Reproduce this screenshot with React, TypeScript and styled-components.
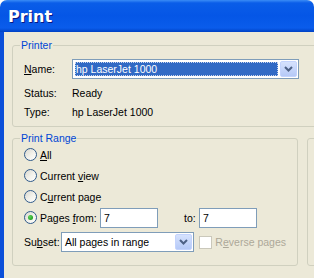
import React from 'react';
import styled, { createGlobalStyle } from 'styled-components';

const GlobalStyle = createGlobalStyle`
  html, body {
    margin: 0;
    padding: 0;
    background: #fff;
  }
  body {
    font-family: "Liberation Sans", Arial, sans-serif;
    font-size: 10.5px;
    color: #000;
  }
`;

const Window = styled.div`
  width: 314px;
  height: 278px;
  overflow: hidden;
  display: flex;
  flex-direction: column;
  border-radius: 7px 7px 0 0;
  background: #ece9d8;
`;

const TitleBar = styled.div`
  height: 32px;
  flex: none;
  display: flex;
  align-items: center;
  padding-left: 8px;
  background: linear-gradient(
    #3a8cf6 0px,
    #0a5de8 3px,
    #0556e6 16px,
    #0a5ceb 28px,
    #0041c4 32px
  );
`;

const Title = styled.span`
  font-family: "DejaVu Sans", sans-serif;
  font-weight: bold;
  font-size: 16px;
  color: #fff;
  text-shadow: 1px 1px 0 #0a1883;
  margin-top: 1px;
`;

const Body = styled.div`
  flex: 1;
  display: flex;
  flex-direction: column;
  border-left: 4px solid #0b4fd9;
  padding: 13px 0 0 8px;
`;

const Group = styled.div<{ $width: number; $bottom?: number }>`
  flex: none;
  width: ${p => p.$width}px;
  box-sizing: border-box;
  border: 1px solid #d0d0bf;
  border-radius: 3px;
  display: flex;
  flex-direction: column;
  padding: 0 11px ${p => p.$bottom ?? 8}px 11px;
`;

const Legend = styled.span`
  align-self: flex-start;
  margin: -7px 0 0 -4px;
  padding: 0 1px;
  height: 13px;
  line-height: 13px;
  background: #ece9d8;
  color: #0046d5;
`;

const Row = styled.div<{ $h?: number; $top?: number }>`
  display: flex;
  align-items: center;
  height: ${p => p.$h ?? 13}px;
  margin-top: ${p => p.$top ?? 0}px;
  white-space: nowrap;
`;

const Caption = styled.span<{ $w?: number; $ml?: number; $disabled?: boolean }>`
  flex: none;
  width: ${p => (p.$w ? `${p.$w}px` : 'auto')};
  margin-left: ${p => p.$ml ?? 0}px;
  color: ${p => (p.$disabled ? '#aca899' : '#000')};
`;

const U = styled.span`
  text-decoration: underline;
`;

const Combo = styled.div<{ $w: number }>`
  width: ${p => p.$w}px;
  height: 20px;
  box-sizing: border-box;
  border: 1px solid #7f9db9;
  background: #fff;
  display: flex;
  align-items: stretch;
  padding: 1px;
`;

const ComboValue = styled.div<{ $selected?: boolean }>`
  flex: 1;
  display: flex;
  align-items: center;
  margin: 1px 2px 1px 1px;
  padding-left: 1px;
  background: ${p => (p.$selected ? '#316ac5' : 'transparent')};
  color: ${p => (p.$selected ? '#fff' : '#000')};
  outline: ${p => (p.$selected ? '1px dotted #c7d4ec' : 'none')};
  outline-offset: -1px;
`;

const DropButton = styled.div`
  width: 17px;
  box-sizing: border-box;
  border: 1px solid #c3d3fd;
  border-radius: 2px;
  background: linear-gradient(#d6e2fd, #b5c9f7);
  display: flex;
  align-items: center;
  justify-content: center;
`;

const Field = styled.div<{ $w: number }>`
  width: ${p => p.$w}px;
  height: 20px;
  box-sizing: border-box;
  border: 1px solid #7f9db9;
  background: #fff;
  padding-left: 3px;
  display: flex;
  align-items: center;
`;

const RadioCircle = styled.span<{ $checked?: boolean }>`
  flex: none;
  width: 13px;
  height: 13px;
  box-sizing: border-box;
  border-radius: 50%;
  border: 1px solid #2f5a8a;
  background: linear-gradient(135deg, #d8d7cf 0%, #f3f2ec 55%, #ffffff 100%);
  display: flex;
  align-items: center;
  justify-content: center;
  margin-right: 3px;
  &::after {
    content: '';
    width: 5px;
    height: 5px;
    border-radius: 50%;
    background: ${p =>
      p.$checked
        ? 'radial-gradient(circle at 35% 35%, #5fd35b, #21a121 75%)'
        : 'transparent'};
  }
`;

const CheckBox = styled.span`
  flex: none;
  width: 13px;
  height: 13px;
  box-sizing: border-box;
  border: 1px solid #cac8bb;
  background: #fff;
  margin: 0 3px 0 5px;
`;

const Columns = styled.div`
  display: flex;
  gap: 9px;
  margin-top: 11px;
`;

const Chevron = () => (
  <svg width="9" height="6" viewBox="0 0 9 6">
    <path d="M1 1 L4.5 4.5 L8 1" fill="none" stroke="#4d6185" strokeWidth="2" />
  </svg>
);

const Radio: React.FC<{ checked?: boolean; children: React.ReactNode; w?: number }> = ({
  checked,
  children,
  w,
}) => (
  <>
    <RadioCircle $checked={checked} />
    <Caption $w={w}>{children}</Caption>
  </>
);

export default function App() {
  return (
    <>
      <GlobalStyle />
      <Window>
        <TitleBar>
          <Title>Print</Title>
        </TitleBar>
        <Body>
          <Group $width={330}>
            <Legend>Printer</Legend>
            <Row $h={20} $top={7}>
              <Caption $w={48}>
                <U>N</U>ame:
              </Caption>
              <Combo $w={227}>
                <ComboValue $selected>hp LaserJet 1000</ComboValue>
                <DropButton>
                  <Chevron />
                </DropButton>
              </Combo>
            </Row>
            <Row $top={7}>
              <Caption $w={48}>Status:</Caption>
              <Caption>Ready</Caption>
            </Row>
            <Row $top={6}>
              <Caption $w={48}>Type:</Caption>
              <Caption>hp LaserJet 1000</Caption>
            </Row>
          </Group>
          <Columns>
            <Group $width={286} $bottom={13}>
              <Legend>Print Range</Legend>
              <Row $h={21} $top={-1}>
                <Radio>
                  <U>A</U>ll
                </Radio>
              </Row>
              <Row $h={21}>
                <Radio>
                  Current <U>v</U>iew
                </Radio>
              </Row>
              <Row $h={21}>
                <Radio>
                  C<U>u</U>rrent page
                </Radio>
              </Row>
              <Row $h={21}>
                <Radio checked w={60}>
                  Pages <U>f</U>rom:
                </Radio>
                <Field $w={58}>7</Field>
                <Caption $ml={26} $w={15}>
                  to:
                </Caption>
                <Field $w={58}>7</Field>
              </Row>
              <Row $h={20} $top={4}>
                <Caption $w={37}>
                  Su<U>b</U>set:
                </Caption>
                <Combo $w={134}>
                  <ComboValue>All pages in range</ComboValue>
                  <DropButton>
                    <Chevron />
                  </DropButton>
                </Combo>
                <CheckBox />
                <Caption $disabled>
                  R<U>e</U>verse pages
                </Caption>
              </Row>
            </Group>
            {/* next group (copies) starts just at the window's right edge */}
            <Group $width={100} />
          </Columns>
        </Body>
      </Window>
    </>
  );
}
